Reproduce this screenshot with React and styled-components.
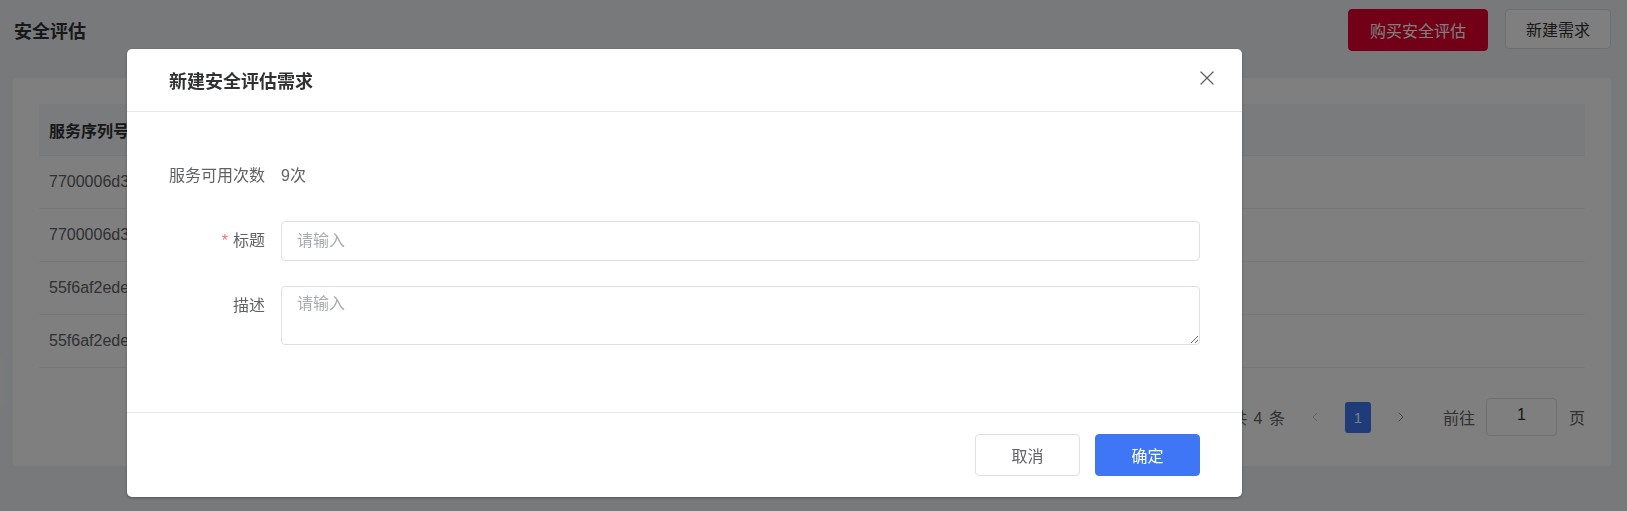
import React from 'react';
import styled, { createGlobalStyle } from 'styled-components';
import { ChevronLeft, ChevronRight, X } from 'lucide-react';

const FONT = '"Liberation Sans", "Noto Sans CJK SC", sans-serif';

const GlobalStyle = createGlobalStyle`
  html, body {
    margin: 0;
    padding: 0;
  }
  body {
    font-family: ${FONT};
    background: #f0f2f5;
  }
  * {
    box-sizing: border-box;
  }
`;

const Page = styled.div`
  position: relative;
  min-height: 511px;
  background: #f0f2f5;
  padding: 9px 16px 0 13px;
`;

const PageHeader = styled.div`
  display: flex;
  align-items: center;
  justify-content: space-between;
  height: 42px;
`;

const PageTitle = styled.h1`
  margin: 0 0 0 1px;
  font-size: 18px;
  font-weight: 700;
  color: #303133;
`;

const HeaderActions = styled.div`
  display: flex;
  gap: 17px;
`;

const HeaderButton = styled.button`
  height: ${(p) => (p.primary ? 42 : 40)}px;
  padding: 0 ${(p) => (p.primary ? 21 : 20)}px;
  font-family: ${FONT};
  font-size: 16px;
  border-radius: 4px;
  border: 1px solid ${(p) => (p.primary ? '#e4002c' : '#dcdfe6')};
  background: ${(p) => (p.primary ? '#e4002c' : '#ffffff')};
  color: ${(p) => (p.primary ? '#ffffff' : '#303133')};
`;

const Card = styled.div`
  margin-top: 27px;
  background: #ffffff;
  border-radius: 4px;
  padding: 26px 26px 30px;
`;

const Table = styled.div`
  display: flex;
  flex-direction: column;
`;

const Row = styled.div`
  display: grid;
  grid-template-columns: 260px 300px 300px 303px 1fr;
  align-items: center;
  height: ${(p) => (p.head ? 52 : 53)}px;
  background: ${(p) => (p.head ? '#f5f7fa' : '#ffffff')};
  border-bottom: 1px solid #ebeef5;
`;

const Cell = styled.div`
  padding: 0 10px;
  font-size: 16px;
  font-weight: ${(p) => (p.head ? 700 : 400)};
  color: ${(p) => (p.head ? '#303133' : '#606266')};
  white-space: nowrap;
  overflow: hidden;
  text-align: ${(p) => (p.end ? 'right' : 'left')};
`;

const Pager = styled.div`
  display: flex;
  align-items: center;
  justify-content: flex-end;
  margin-top: 30px;
  height: 38px;
  font-size: 16px;
  color: #606266;
`;

const PagerText = styled.span`
  margin: ${(p) => p.m || '0'};
  word-spacing: 2px;
`;

const PagerArrow = styled.span`
  display: flex;
  align-items: center;
  margin: 0 ${(p) => p.gap || 0}px;
  color: ${(p) => (p.disabled ? '#c0c4cc' : '#909399')};
`;

const PageNumber = styled.span`
  display: flex;
  align-items: center;
  justify-content: center;
  width: 26px;
  height: 31px;
  border-radius: 3px;
  background: #3e76f5;
  color: #ffffff;
  font-size: 15px;
`;

const JumpInput = styled.div`
  width: 71px;
  height: 38px;
  margin: 0 12px 0 11px;
  border: 1px solid #dcdfe6;
  border-radius: 4px;
  display: flex;
  align-items: center;
  justify-content: center;
  color: #303133;
  padding-bottom: 4px;
`;

const SideHandle = styled.div`
  position: absolute;
  left: 0;
  top: 359px;
  width: 4px;
  height: 48px;
  background: #f7f7f9;
  border-radius: 0 4px 4px 0;
`;

const Overlay = styled.div`
  position: fixed;
  inset: 0;
  background: rgba(0, 0, 0, 0.5);
  display: flex;
  align-items: flex-start;
  padding: 49px 0 0 127px;
`;

const Dialog = styled.div`
  width: 1115px;
  background: #ffffff;
  border-radius: 5px;
  box-shadow: 0 1px 3px rgba(0, 0, 0, 0.3);
  display: flex;
  flex-direction: column;
`;

const DialogHeader = styled.div`
  display: flex;
  align-items: center;
  justify-content: space-between;
  height: 63px;
  padding: 0 23px 0 42px;
  border-bottom: 1px solid #e4e7ed;
`;

const DialogTitle = styled.h2`
  margin: 0;
  font-size: 18px;
  font-weight: 700;
  color: #303133;
`;

const CloseButton = styled.span`
  display: flex;
  color: #606266;
  margin-top: -5px;
`;

const DialogBody = styled.div`
  padding: 44px 42px 67px;
  display: flex;
  flex-direction: column;
  gap: 25px;
`;

const FormRow = styled.div`
  display: flex;
  align-items: flex-start;
`;

const Label = styled.label`
  flex: 0 0 112px;
  padding-right: 16px;
  text-align: right;
  font-size: 16px;
  line-height: 40px;
  color: #606266;
  white-space: nowrap;
`;

const Required = styled.span`
  color: #f56c6c;
  margin-right: 5px;
`;

const Value = styled.span`
  font-size: 16px;
  line-height: 40px;
  color: #606266;
`;

const TextInput = styled.input`
  flex: 1;
  height: 40px;
  padding: 0 15px;
  font-family: ${FONT};
  font-size: 16px;
  color: #606266;
  border: 1px solid #dcdfe6;
  border-radius: 4px;
  outline: none;

  &::placeholder {
    color: #a8abb2;
  }
`;

const TextArea = styled.textarea`
  flex: 1;
  height: 59px;
  padding: 5px 15px;
  font-family: ${FONT};
  font-size: 16px;
  line-height: 1.5;
  color: #606266;
  border: 1px solid #dcdfe6;
  border-radius: 4px;
  outline: none;
  resize: vertical;

  &::placeholder {
    color: #a8abb2;
  }
`;

const DialogFooter = styled.div`
  display: flex;
  justify-content: flex-end;
  gap: 15px;
  padding: 21px 42px 21px;
  border-top: 1px solid #e4e7ed;
`;

const FooterButton = styled.button`
  width: 105px;
  height: 42px;
  font-family: ${FONT};
  font-size: 16px;
  border-radius: 4px;
  border: 1px solid ${(p) => (p.primary ? '#3e76f5' : '#dcdfe6')};
  background: ${(p) => (p.primary ? '#3e76f5' : '#ffffff')};
  color: ${(p) => (p.primary ? '#ffffff' : '#606266')};
`;

const rows = [
  ['7700006d3f8a21c94e60', '安全评估', '2023-06-12 10:21:33', '已完成'],
  ['7700006d3f8a21c94e60', '安全评估', '2023-05-28 16:02:10', '已完成'],
  ['55f6af2ede9b04a17c33', '安全评估', '2023-04-15 09:45:51', '已完成'],
  ['55f6af2ede9b04a17c33', '安全评估', '2023-03-02 14:18:07', '已完成'],
];

export default function App() {
  return (
    <>
      <GlobalStyle />
      <Page>
        <PageHeader>
          <PageTitle>安全评估</PageTitle>
          <HeaderActions>
            <HeaderButton primary>购买安全评估</HeaderButton>
            <HeaderButton>新建需求</HeaderButton>
          </HeaderActions>
        </PageHeader>

        <Card>
          <Table>
            <Row head>
              <Cell head>服务序列号</Cell>
              <Cell head>服务类型</Cell>
              <Cell head>创建时间</Cell>
              <Cell head end>状态</Cell>
              <Cell head />
            </Row>
            {rows.map((r, i) => (
              <Row key={i}>
                <Cell>{r[0]}</Cell>
                <Cell>{r[1]}</Cell>
                <Cell>{r[2]}</Cell>
                <Cell end>{r[3]}</Cell>
                <Cell />
              </Row>
            ))}
          </Table>
          <Pager>
            <PagerText>共 4 条</PagerText>
            <PagerArrow disabled gap={22}>
              <ChevronLeft size={16} strokeWidth={1.5} />
            </PagerArrow>
            <PageNumber>1</PageNumber>
            <PagerArrow gap={22}>
              <ChevronRight size={16} strokeWidth={1.5} />
            </PagerArrow>
            <PagerText m="0 0 0 12px">前往</PagerText>
            <JumpInput>1</JumpInput>
            <PagerText>页</PagerText>
          </Pager>
        </Card>

        <SideHandle />

        <Overlay>
          <Dialog>
            <DialogHeader>
              <DialogTitle>新建安全评估需求</DialogTitle>
              <CloseButton>
                <X size={24} strokeWidth={1.3} />
              </CloseButton>
            </DialogHeader>
            <DialogBody>
              <FormRow>
                <Label>服务可用次数</Label>
                <Value>9次</Value>
              </FormRow>
              <FormRow>
                <Label>
                  <Required>*</Required>标题
                </Label>
                <TextInput placeholder="请输入" />
              </FormRow>
              <FormRow>
                <Label>描述</Label>
                <TextArea placeholder="请输入" />
              </FormRow>
            </DialogBody>
            <DialogFooter>
              <FooterButton>取消</FooterButton>
              <FooterButton primary>确定</FooterButton>
            </DialogFooter>
          </Dialog>
        </Overlay>
      </Page>
    </>
  );
}
